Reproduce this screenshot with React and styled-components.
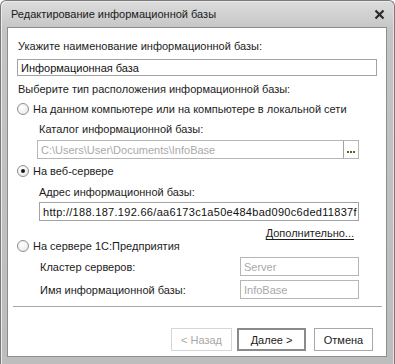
import React from "react"
import styled, { createGlobalStyle } from "styled-components"

const Global = createGlobalStyle`
  html, body {
    margin: 0;
    padding: 0;
    background: #ffffff;
  }
  body {
    font-family: "Liberation Sans", Arial, sans-serif;
  }
`

const Window = styled.div`
  width: 395px;
  height: 364px;
  box-sizing: border-box;
  display: flex;
  flex-direction: column;
  border: 1px solid #7a7a7a;
  border-bottom: none;
  border-radius: 6px 6px 0 0;
  background: linear-gradient(#dcdcdc, #c4c4c4 30px, #bdbdbd);
  box-shadow: inset 1px 1px 0 #ececec, inset -1px 0 0 #e2e2e2;
`

const TitleBar = styled.div`
  height: 26px;
  display: flex;
  align-items: center;
  justify-content: space-between;
  padding: 0 9px 0 10px;
  flex-shrink: 0;
`

const Title = styled.span`
  font-size: 11px;
  color: #1a1a1a;
`

const Close = styled.svg`
  width: 11px;
  height: 11px;
  display: block;
`

const Client = styled.div`
  flex: 1;
  margin: 0 7px 7px 6px;
  border: 1px solid #8d8d8d;
  background: #ffffff;
  padding: 0 9px 0 9px;
  display: flex;
  flex-direction: column;
`

const Label = styled.div`
  height: ${p => p.$h || 16}px;
  margin-top: ${p => p.$top}px;
  margin-left: ${p => p.$indent || 1}px;
  display: flex;
  align-items: center;
  font-size: 11px;
  color: #1c1c1c;
  white-space: nowrap;
`

const Field = styled.div`
  height: ${p => p.$h}px;
  margin-top: ${p => p.$top}px;
  margin-left: ${p => p.$indent || 0}px;
  margin-right: ${p => p.$right || 0}px;
  box-sizing: border-box;
  border: 1px solid ${p => (p.$disabled ? "#b6b6b6" : "#a3a3a3")};
  display: flex;
  align-items: center;
  padding-left: 3px;
  font-size: 11px;
  letter-spacing: ${p => p.$spacing || 0}px;
  color: ${p => (p.$disabled ? "#a9a9a9" : "#111")};
  white-space: nowrap;
  overflow: hidden;
  background: #fff;
`

const FieldText = styled.span`
  flex: 1;
  overflow: hidden;
`

const Ellipsis = styled.div`
  width: 15px;
  align-self: stretch;
  border-left: 1px solid #a3a3a3;
  display: flex;
  align-items: flex-end;
  justify-content: center;
  gap: 1px;
  padding-bottom: 5px;
  box-sizing: border-box;
  flex-shrink: 0;
`

const Dot = styled.i`
  width: 2px;
  height: 2px;
  background: #6b5a1e;
`

const RadioRow = styled.div`
  height: ${p => p.$h || 16}px;
  margin-top: ${p => p.$top}px;
  display: flex;
  align-items: center;
  gap: 4px;
  font-size: 11px;
  color: #1c1c1c;
  white-space: nowrap;
`

const Radio = styled.span`
  width: 12px;
  height: 12px;
  flex-shrink: 0;
  box-sizing: border-box;
  border-radius: 50%;
  border: 1px solid #8e8e8e;
  background: radial-gradient(circle at 40% 35%, #ffffff, #e6e6e6);
  display: flex;
  align-items: center;
  justify-content: center;
  &::after {
    content: "";
    width: 4px;
    height: 4px;
    border-radius: 50%;
    background: ${p => (p.$checked ? "#1a1a1a" : "transparent")};
  }
`

const LinkRow = styled.div`
  height: 12px;
  margin-top: ${p => p.$top}px;
  display: flex;
  justify-content: flex-end;
  padding-right: 23px;
`

const Link = styled.span`
  font-size: 11px;
  line-height: 12px;
  color: #1c1c1c;
  text-decoration: underline;
  text-underline-offset: 2px;
`

const PairRow = styled.div`
  height: 19px;
  margin-top: ${p => p.$top}px;
  display: flex;
  align-items: center;
  justify-content: space-between;
  padding-left: 23px;
  padding-right: 18px;
`

const PairLabel = styled.span`
  font-size: 11px;
  color: #1c1c1c;
`

const SmallField = styled(Field)`
  width: 119px;
  margin: 0;
  height: 19px;
`

const Separator = styled.div`
  height: 1px;
  background: #a8a8a8;
  margin: ${p => p.$top}px -5px 0 -4px;
`

const Footer = styled.div`
  margin-top: 21px;
  display: flex;
  justify-content: flex-end;
  gap: 5px;
  padding-right: 4px;
`

const Button = styled.div`
  width: ${p => p.$w}px;
  height: 23px;
  box-sizing: border-box;
  border: ${p => (p.$default ? "2px solid #8a8a8a" : "1px solid #a8a8a8")};
  border-color: ${p => (p.$disabled ? "#d6d6d6" : undefined)};
  display: flex;
  align-items: center;
  justify-content: center;
  font-size: 11px;
  color: ${p => (p.$disabled ? "#a8a8a8" : "#1c1c1c")};
  margin-left: ${p => p.$gap || 0}px;
  background: #fff;
`

export default function App() {
  return (
    <>
      <Global />
      <Window>
        <TitleBar>
          <Title>Редактирование информационной базы</Title>
          <Close viewBox="0 0 11 11">
            <path d="M1.5 1.5 L9.5 9.5 M9.5 1.5 L1.5 9.5" stroke="#2a2a2a" strokeWidth="2.2" />
          </Close>
        </TitleBar>
        <Client>
          <Label $top={10}>Укажите наименование информационной базы:</Label>
          <Field $h={17} $top={5}>
            <FieldText>Информационная база</FieldText>
          </Field>
          <Label $top={5}>Выберите тип расположения информационной базы:</Label>
          <RadioRow $top={4}>
            <Radio />
            На данном компьютере или на компьютере в локальной сети
          </RadioRow>
          <Label $top={4} $indent={22}>Каталог информационной базы:</Label>
          <Field $h={19} $top={3} $indent={20} $right={18} $disabled>
            <FieldText>C:\Users\User\Documents\InfoBase</FieldText>
            <Ellipsis>
              <Dot />
              <Dot />
              <Dot />
            </Ellipsis>
          </Field>
          <RadioRow $top={4}>
            <Radio $checked />
            На веб-сервере
          </RadioRow>
          <Label $top={5} $indent={22}>Адрес информационной базы:</Label>
          <Field $h={19} $top={2} $indent={22} $right={18} $spacing={0.3}>
            <FieldText>http://188.187.192.66/aa6173c1a50e484bad090c6ded11837f</FieldText>
          </Field>
          <LinkRow $top={6}>
            <Link>Дополнительно...</Link>
          </LinkRow>
          <RadioRow $top={0} $h={14}>
            <Radio />
            На сервере 1С:Предприятия
          </RadioRow>
          <PairRow $top={4}>
            <PairLabel>Кластер серверов:</PairLabel>
            <SmallField $disabled>Server</SmallField>
          </PairRow>
          <PairRow $top={4}>
            <PairLabel>Имя информационной базы:</PairLabel>
            <SmallField $disabled>InfoBase</SmallField>
          </PairRow>
          <Separator $top={7} />
          <Footer>
            <Button $w={61} $disabled>&lt; Назад</Button>
            <Button $w={69} $default>Далее &gt;</Button>
            <Button $w={59} $gap={3}>Отмена</Button>
          </Footer>
        </Client>
      </Window>
    </>
  )
}
